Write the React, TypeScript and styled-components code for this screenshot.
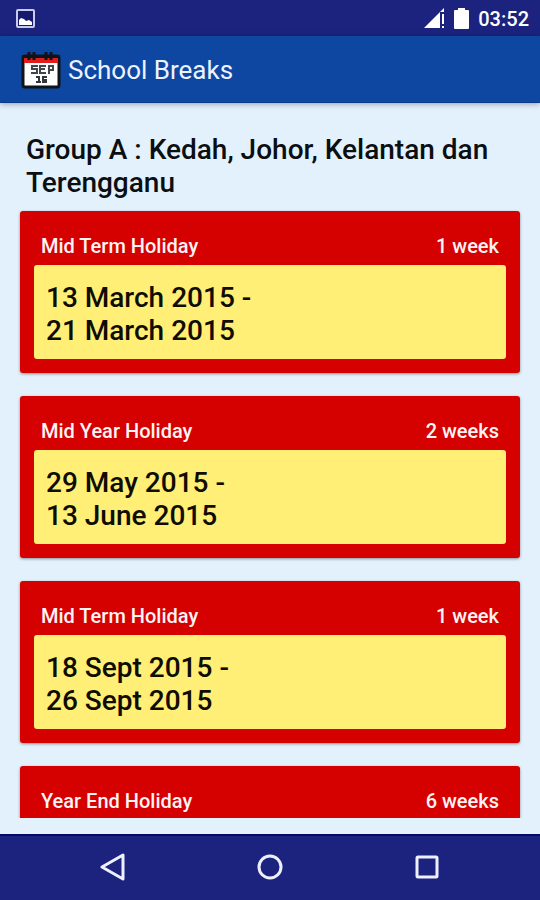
import React from "react";
import styled, { createGlobalStyle } from "styled-components";

const GlobalStyle = createGlobalStyle`
  *, *::before, *::after { box-sizing: border-box; }
  body {
    margin: 0;
    font-family: Roboto, "Noto Sans", sans-serif;
    background: #e3f1fc;
  }
`;

const Screen = styled.div`
  display: flex;
  flex-direction: column;
  height: 100vh;
  overflow: hidden;
  background: #e3f1fc;
`;

const StatusBar = styled.div`
  display: flex;
  align-items: center;
  flex: none;
  height: 36px;
  padding: 0 11px 0 16px;
  background: #1c237e;
  color: #fff;
`;

const StatusIcons = styled.div`
  display: flex;
  align-items: center;
  gap: 9px;
  margin-left: auto;
`;

const Clock = styled.time`
  font-size: 20px;
  line-height: 24px;
  font-weight: 500;
  padding-top: 2px;
`;

const AppBar = styled.header`
  display: flex;
  align-items: center;
  gap: 7px;
  flex: none;
  height: 67px;
  padding: 2px 21px 0;
  background: #0d47a1;
  border-bottom: 1px solid #0a3a8c;
  box-shadow: 0 1px 6px rgba(0, 0, 0, 0.35);
  color: #eef2ff;
`;

const Title = styled.h1`
  margin: 0;
  font-size: 26px;
  line-height: 32px;
  font-weight: 400;
`;

const Content = styled.main`
  display: flex;
  flex-direction: column;
  flex: 1;
  min-height: 0;
  padding: 30px 16px 16px;
`;

const GroupHeading = styled.h2`
  flex: none;
  margin: 0;
  padding: 0 10px;
  font-size: 28px;
  line-height: 33px;
  font-weight: 500;
  color: #0b0f12;
`;

const BreakList = styled.ul`
  display: flex;
  flex-direction: column;
  gap: 23px;
  flex: 1;
  min-height: 0;
  margin: 0;
  padding: 12px 4px 0;
  list-style: none;
  overflow: hidden;
`;

const Card = styled.li`
  flex: none;
  padding: 23px 14px 14px;
  border-radius: 3px;
  background: #d50000;
  box-shadow: 0 1px 3px rgba(0, 0, 0, 0.4);
`;

const CardHeader = styled.div`
  display: flex;
  justify-content: space-between;
  padding: 0 7px 7px;
  font-size: 20px;
  line-height: 24px;
  font-weight: 500;
  color: #fff3f4;
`;

const CardName = styled.h3`
  margin: 0;
  font: inherit;
`;

const Dates = styled.p`
  margin: 0;
  padding: 16px 12px 12px;
  border-radius: 3px;
  background: #ffef76;
  font-size: 28px;
  line-height: 33px;
  font-weight: 500;
  color: #0f0c00;
`;

const DateLine = styled.span`
  display: block;
`;

const NavBar = styled.nav`
  display: flex;
  justify-content: center;
  gap: 93px;
  flex: none;
  height: 66px;
  padding-bottom: 2px;
  background: #1c237e;
  border-top: 2px solid #07096a;
`;

const NavButton = styled.button`
  display: flex;
  align-items: center;
  justify-content: center;
  width: 64px;
  padding: 0;
  border: 0;
  background: none;
  color: #eef0ff;
`;

const PictureIcon = () => (
  <svg width="19" height="19" viewBox="0 0 19 19" aria-hidden="true">
    <rect x="1" y="1" width="17" height="17" rx="1" fill="#17196f" stroke="#c9cbea" strokeWidth="2" />
    <path d="M3 16V11L5 9L8 10L10 12L13 11L16 13V16Z" fill="#fff" />
  </svg>
);

const SignalIcon = () => (
  <svg width="21" height="21" viewBox="0 0 21 21" aria-hidden="true">
    <path d="M0 20L20 0V4H16V20Z" fill="#fff" />
    <path d="M18 6h2v10h-2zM18 18h2v2h-2z" fill="#fff" />
  </svg>
);

const BatteryIcon = () => (
  <svg width="15" height="21" viewBox="0 0 15 21" aria-hidden="true">
    <path d="M4 0H11V2H14Q15 2 15 3V20Q15 21 14 21H1Q0 21 0 20V3Q0 2 1 2H4Z" fill="#fff" />
  </svg>
);

const CalendarIcon = () => (
  <svg width="40" height="37" viewBox="0 0 40 37" aria-hidden="true">
    <rect x="2" y="4" width="36" height="31" rx="2" fill="#fff" stroke="#111318" strokeWidth="3" />
    <path d="M3 5H37V11H3Z" fill="#e21b1b" />
    <path d="M1 3H39V6H1Z" fill="#111318" />
    <path d="M8 0V8M13 0V8M25 0V8M30 0V8" stroke="#111318" strokeWidth="3" />
    <path d="M17 14H11V17H16V21H10M25 14H19V21H25M19 17H24M28 22V14H32V18H28" fill="none" stroke="#44464b" strokeWidth="2" />
    <path d="M15 25H18V30M15 30H20M26 25H22V30H25V28H22" fill="none" stroke="#333539" strokeWidth="2" />
  </svg>
);

const BackIcon = () => (
  <svg width="26" height="28" viewBox="0 0 26 28" aria-hidden="true">
    <path d="M23 2V26L2 14Z" fill="none" stroke="currentColor" strokeWidth="3" strokeLinejoin="round" />
  </svg>
);

const HomeIcon = () => (
  <svg width="26" height="26" viewBox="0 0 26 26" aria-hidden="true">
    <circle cx="13" cy="13" r="11" fill="none" stroke="currentColor" strokeWidth="3" />
  </svg>
);

const RecentsIcon = () => (
  <svg width="24" height="24" viewBox="0 0 24 24" aria-hidden="true">
    <rect x="2" y="2" width="20" height="20" rx="1" fill="none" stroke="currentColor" strokeWidth="3" />
  </svg>
);

const breaks = [
  { name: "Mid Term Holiday", length: "1 week", from: "13 March 2015", to: "21 March 2015" },
  { name: "Mid Year Holiday", length: "2 weeks", from: "29 May 2015", to: "13 June 2015" },
  { name: "Mid Term Holiday", length: "1 week", from: "18 Sept 2015", to: "26 Sept 2015" },
  { name: "Year End Holiday", length: "6 weeks" },
];

export default function App() {
  return (
    <Screen>
      <GlobalStyle />
      <StatusBar>
        <PictureIcon />
        <StatusIcons>
          <SignalIcon />
          <BatteryIcon />
          <Clock>03:52</Clock>
        </StatusIcons>
      </StatusBar>
      <AppBar>
        <CalendarIcon />
        <Title>School Breaks</Title>
      </AppBar>
      <Content>
        <GroupHeading>Group A : Kedah, Johor, Kelantan dan Terengganu</GroupHeading>
        <BreakList>
          {breaks.map((item, index) => (
            <Card key={index}>
              <CardHeader>
                <CardName>{item.name}</CardName>
                <span>{item.length}</span>
              </CardHeader>
              {item.from && (
                <Dates>
                  <DateLine>{item.from} -</DateLine>
                  <DateLine>{item.to}</DateLine>
                </Dates>
              )}
            </Card>
          ))}
        </BreakList>
      </Content>
      <NavBar aria-label="System navigation">
        <NavButton aria-label="Back"><BackIcon /></NavButton>
        <NavButton aria-label="Home"><HomeIcon /></NavButton>
        <NavButton aria-label="Recent apps"><RecentsIcon /></NavButton>
      </NavBar>
    </Screen>
  );
}
